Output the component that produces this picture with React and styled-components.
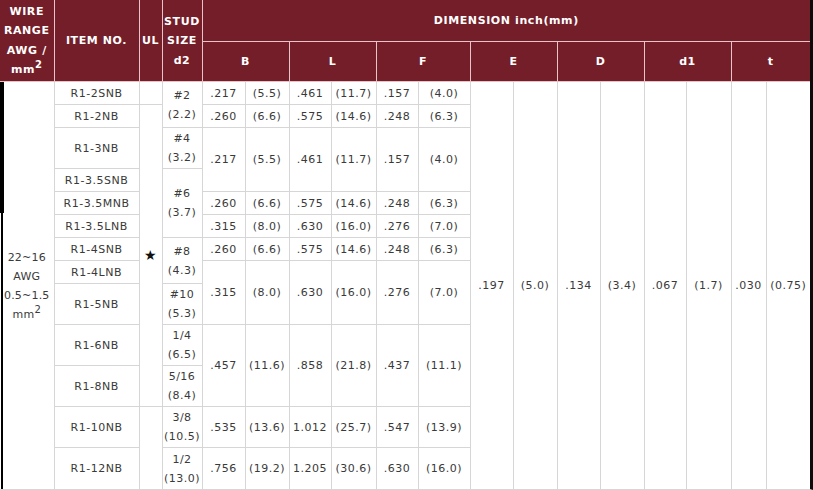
import React from "react";
import styled, { createGlobalStyle } from "styled-components";

const Global = createGlobalStyle`
  html, body { margin: 0; padding: 0; background: #fff; }
`;

const Page = styled.div`
  display: inline-block;
  border-right: 3px solid #0c0c0c;
  border-bottom: 1px solid #d6d6d6;
`;

const Table = styled.table`
  border-collapse: collapse;
  border-style: hidden;
  table-layout: fixed;
  width: 810px;
  font-family: "DejaVu Sans", Verdana, sans-serif;
`;

const Row = styled.tr`
  height: ${(p) => p.$h}px;
`;

const Th = styled.th`
  background: #741e29;
  color: #fff;
  font-size: 11px;
  font-weight: bold;
  letter-spacing: 0.6px;
  line-height: 19.5px;
  border: 1px solid #e6c4c8;
  padding: 0;
  padding-top: ${(p) => (p.$sub ? 2 : 1)}px;
  text-align: center;
  vertical-align: middle;
  white-space: nowrap;
`;

const Td = styled.td`
  border: 1px solid #d6d6d6;
  background: #fff;
  color: #3a3a3a;
  font-size: 11px;
  letter-spacing: 0.5px;
  line-height: 19px;
  text-align: center;
  vertical-align: middle;
  padding: 1px 0 0;
  white-space: nowrap;
`;

const WireCell = styled(Td)`
  letter-spacing: 0.2px;
  background:
    linear-gradient(#000, #000) 0 0 / 4px 131px no-repeat,
    linear-gradient(#000, #000) 1px 0 / 2px 100% no-repeat,
    #fff;
`;

const Star = styled.span`
  font-size: 14px;
  color: #111;
`;

const Sup = styled.sup`
  font-size: 10px;
  line-height: 0;
  vertical-align: 5px;
`;

const colWidths = [54, 85, 23, 40, 43, 44, 42, 45, 42, 52, 43, 44, 43, 44, 42, 45, 35, 44];

const rows = [
  { item: "R1-2SNB", h: 23, ul: { rs: 1, v: "" }, stud: { rs: 2, v: ["#2", "(2.2)"] }, dims: { rs: 1, v: [".217", "(5.5)", ".461", "(11.7)", ".157", "(4.0)"] } },
  { item: "R1-2NB", h: 23, ul: { rs: 10, v: "star" }, dims: { rs: 1, v: [".260", "(6.6)", ".575", "(14.6)", ".248", "(6.3)"] } },
  { item: "R1-3NB", h: 41, stud: { rs: 1, v: ["#4", "(3.2)"] }, dims: { rs: 2, v: [".217", "(5.5)", ".461", "(11.7)", ".157", "(4.0)"] } },
  { item: "R1-3.5SNB", h: 23, stud: { rs: 3, v: ["#6", "(3.7)"] } },
  { item: "R1-3.5MNB", h: 23, dims: { rs: 1, v: [".260", "(6.6)", ".575", "(14.6)", ".248", "(6.3)"] } },
  { item: "R1-3.5LNB", h: 23, dims: { rs: 1, v: [".315", "(8.0)", ".630", "(16.0)", ".276", "(7.0)"] } },
  { item: "R1-4SNB", h: 23, stud: { rs: 2, v: ["#8", "(4.3)"] }, dims: { rs: 1, v: [".260", "(6.6)", ".575", "(14.6)", ".248", "(6.3)"] } },
  { item: "R1-4LNB", h: 23, dims: { rs: 2, v: [".315", "(8.0)", ".630", "(16.0)", ".276", "(7.0)"] } },
  { item: "R1-5NB", h: 41, stud: { rs: 1, v: ["#10", "(5.3)"] } },
  { item: "R1-6NB", h: 41, stud: { rs: 1, v: ["1/4", "(6.5)"] }, dims: { rs: 2, v: [".457", "(11.6)", ".858", "(21.8)", ".437", "(11.1)"] } },
  { item: "R1-8NB", h: 41, stud: { rs: 1, v: ["5/16", "(8.4)"] } },
  { item: "R1-10NB", h: 41, ul: { rs: 2, v: "" }, stud: { rs: 1, v: ["3/8", "(10.5)"] }, dims: { rs: 1, v: [".535", "(13.6)", "1.012", "(25.7)", ".547", "(13.9)"] } },
  { item: "R1-12NB", h: 42, stud: { rs: 1, v: ["1/2", "(13.0)"] }, dims: { rs: 1, v: [".756", "(19.2)", "1.205", "(30.6)", ".630", "(16.0)"] } },
];

const common = [".197", "(5.0)", ".134", "(3.4)", ".067", "(1.7)", ".030", "(0.75)"];

const Lines = ({ items }) =>
  items.map((t, i) => (
    <React.Fragment key={i}>
      {i > 0 && <br />}
      {t}
    </React.Fragment>
  ));

export default function App() {
  return (
    <>
      <Global />
      <Page>
        <Table>
          <colgroup>
            {colWidths.map((w, i) => (
              <col key={i} style={{ width: w }} />
            ))}
          </colgroup>
          <thead>
            <Row $h={41}>
              <Th rowSpan={2}>
                WIRE<br />RANGE<br />AWG /<br />mm<Sup>2</Sup>
              </Th>
              <Th rowSpan={2}>ITEM NO.</Th>
              <Th rowSpan={2}>UL</Th>
              <Th rowSpan={2}>
                STUD<br />SIZE<br />d2
              </Th>
              <Th colSpan={14}>DIMENSION inch(mm)</Th>
            </Row>
            <Row $h={40}>
              {["B", "L", "F", "E", "D", "d1", "t"].map((k) => (
                <Th key={k} colSpan={2} $sub>
                  {k}
                </Th>
              ))}
            </Row>
          </thead>
          <tbody>
            {rows.map((r, i) => (
              <Row key={r.item} $h={r.h}>
                {i === 0 && (
                  <WireCell rowSpan={rows.length}>
                    22~16<br />AWG<br />0.5~1.5<br />mm<Sup>2</Sup>
                  </WireCell>
                )}
                <Td>{r.item}</Td>
                {r.ul && (
                  <Td rowSpan={r.ul.rs}>{r.ul.v === "star" ? <Star>★</Star> : ""}</Td>
                )}
                {r.stud && (
                  <Td rowSpan={r.stud.rs}>
                    <Lines items={r.stud.v} />
                  </Td>
                )}
                {r.dims &&
                  r.dims.v.map((v, j) => (
                    <Td key={j} rowSpan={r.dims.rs}>
                      {v}
                    </Td>
                  ))}
                {i === 0 &&
                  common.map((v, j) => (
                    <Td key={"c" + j} rowSpan={rows.length}>
                      {v}
                    </Td>
                  ))}
              </Row>
            ))}
          </tbody>
        </Table>
      </Page>
    </>
  );
}
